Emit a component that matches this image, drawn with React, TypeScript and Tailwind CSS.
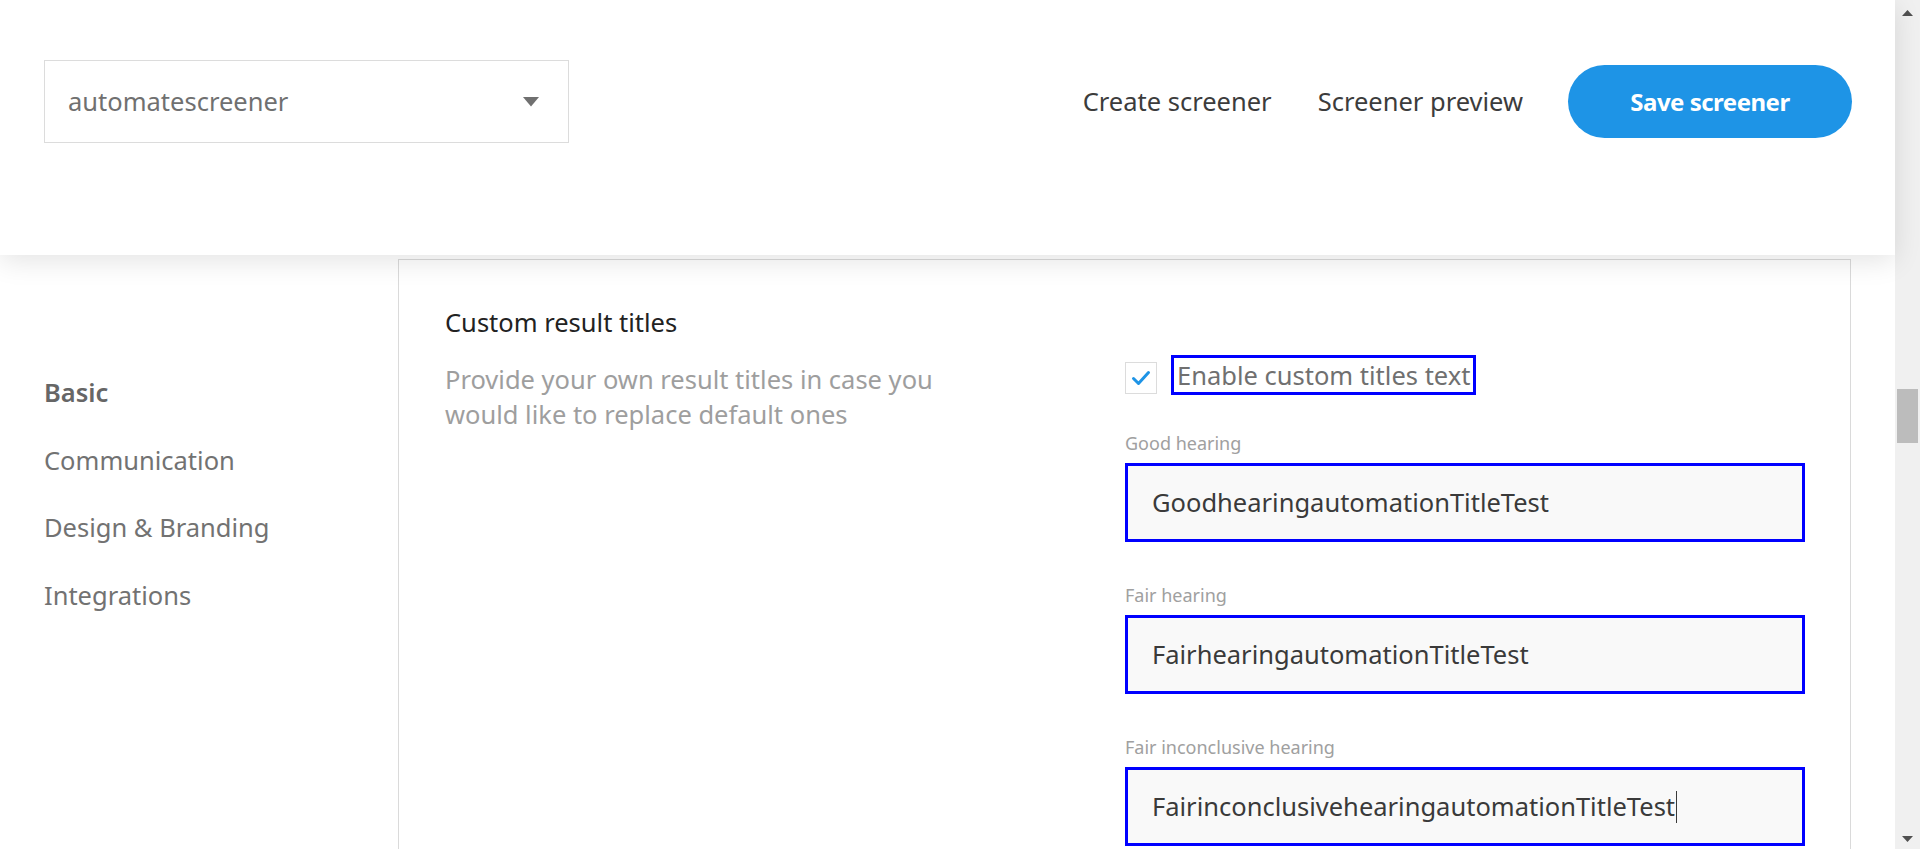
const navItems = [
  { label: "Basic", active: true },
  { label: "Communication", active: false },
  { label: "Design & Branding", active: false },
  { label: "Integrations", active: false },
];

const titleFields = [
  { label: "Good hearing", value: "GoodhearingautomationTitleTest" },
  { label: "Fair hearing", value: "FairhearingautomationTitleTest" },
  { label: "Fair inconclusive hearing", value: "FairinconclusivehearingautomationTitleTest", focused: true },
];

function Header() {
  return (
    <header className="relative z-10 h-[255px] bg-white pt-[60px] pl-[44px] pr-[43px] shadow-[0_6px_26px_rgba(0,0,0,0.11)]">
      <div className="flex items-center">
        <div className="flex h-[83px] w-[525px] items-center justify-between border border-[#dcdcdc] bg-white pl-[23px] pr-[29px]">
          <span className="text-[25.5px] text-[#707070]">automatescreener</span>
          <svg width="16" height="10" viewBox="0 0 16 10">
            <path d="M0 0h16L8 9.5z" fill="#707070" />
          </svg>
        </div>
        <nav className="ml-auto flex items-center">
          <a className="text-[25.5px] text-[#3c3c3c]">Create screener</a>
          <a className="ml-[46px] text-[25.5px] text-[#3c3c3c]">Screener preview</a>
          <button className="ml-[45px] flex h-[73px] w-[284px] items-center justify-center rounded-full bg-[#1e94e6] text-[24px] font-bold tracking-[-0.5px] text-white">
            Save screener
          </button>
        </nav>
      </div>
    </header>
  );
}

function Checkbox() {
  return (
    <div className="mb-[1px] flex h-[32px] w-[32px] items-center justify-center border border-[#dcdcdc] bg-white">
      <svg width="20" height="16" viewBox="0 0 20 16">
        <path d="M2.5 8.5l5 5L17.5 2.5" fill="none" stroke="#1e94e6" strokeWidth="3" strokeLinecap="round" strokeLinejoin="round" />
      </svg>
    </div>
  );
}

function TitleField({ label, value, focused }: { label: string; value: string; focused?: boolean }) {
  return (
    <div>
      <div className="text-[18px] leading-[24px] text-[#a0a0a0]">{label}</div>
      <div className="mt-[8px] flex h-[79px] items-center border-[3px] border-[#0000ff] bg-[#f9f9f9] pl-[24px] text-[25.5px] text-[#3a3a3a]">
        <span>{value}</span>
        {focused && <span className="ml-[1px] h-[32px] w-px bg-[#3a3a3a]" />}
      </div>
    </div>
  );
}

function Scrollbar() {
  return (
    <div className="flex h-full w-[25px] shrink-0 flex-col items-center bg-[#f0f0f0]">
      <div className="flex h-[26px] items-center justify-center">
        <svg width="11" height="6" viewBox="0 0 11 6">
          <path d="M0 6h11L5.5 0z" fill="#505050" />
        </svg>
      </div>
      <div className="mt-[363px] h-[54px] w-[21px] bg-[#bcbcbc]" />
      <div className="flex-1" />
      <div className="flex h-[20px] items-center justify-center">
        <svg width="11" height="6" viewBox="0 0 11 6">
          <path d="M0 0h11L5.5 6z" fill="#505050" />
        </svg>
      </div>
    </div>
  );
}

export default function App() {
  return (
    <div className="flex h-[849px] w-full overflow-hidden bg-white font-['Noto_Sans',sans-serif]">
      <div className="flex min-w-0 flex-1 flex-col">
        <Header />
        <div className="flex flex-1 pr-[44px]">
          <aside className="w-[398px] shrink-0 pl-[44px] pt-[120px]">
            <ul className="flex flex-col gap-[33.5px]">
              {navItems.map((item) => (
                <li
                  key={item.label}
                  className={
                    item.active
                      ? "text-[25.5px] leading-[34px] font-semibold text-[#666666]"
                      : "text-[25.5px] leading-[34px] text-[#727272]"
                  }
                >
                  {item.label}
                </li>
              ))}
            </ul>
          </aside>
          <section className="mt-[4px] flex-1 border-x border-t border-[#dadada] bg-white pl-[46px] pr-[45px] pt-[45px]">
            <h3 className="text-[25.5px] leading-[34px] text-[#222222]">Custom result titles</h3>
            <div className="mt-[16px] flex items-start justify-between">
              <p className="w-[530px] pt-[7px] text-[25.5px] leading-[35px] text-[#9e9e9e]">
                Provide your own result titles in case you would like to replace default ones
              </p>
              <div className="w-[680px]">
                <div className="flex h-[40px] items-end">
                  <Checkbox />
                  <span className="ml-[14px] border-[3px] border-[#0000ff] px-[3px] text-[25.5px] leading-[34px] text-[#707070]">
                    Enable custom titles text
                  </span>
                </div>
                <div className="mt-[36px] flex flex-col gap-[41px]">
                  {titleFields.map((f) => (
                    <TitleField key={f.label} label={f.label} value={f.value} focused={f.focused} />
                  ))}
                </div>
              </div>
            </div>
          </section>
        </div>
      </div>
      <Scrollbar />
    </div>
  );
}
